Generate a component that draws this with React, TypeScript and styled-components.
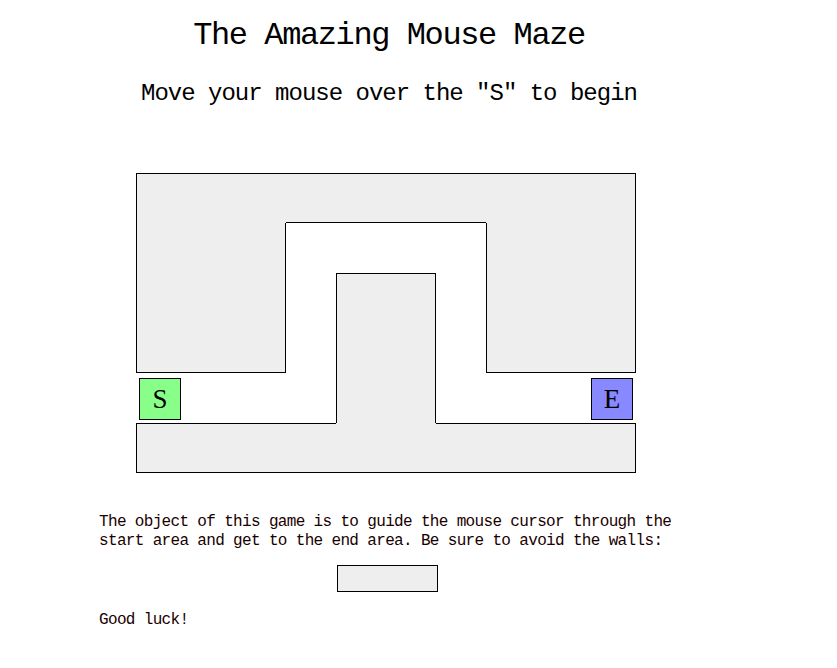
import React from "react";
import styled, { createGlobalStyle } from "styled-components";

const Global = createGlobalStyle`
  html, body { margin: 0; padding: 0; background: #fff; }
  body { font-family: "Liberation Mono", "DejaVu Sans Mono", monospace; color: #000; }
`;

const Page = styled.div`
  width: 837px;
  min-height: 668px;
  padding-top: 16px;
  box-sizing: border-box;
`;

const Content = styled.div`
  margin-left: 99px;
  width: 580px;
  display: flex;
  flex-direction: column;
`;

const Title = styled.h1`
  margin: 0;
  font-size: 32px;
  line-height: 40px;
  font-weight: normal;
  letter-spacing: -1.4px;
  text-align: center;
`;

const Subtitle = styled.h2`
  margin: 23px 0 0;
  font-size: 24px;
  line-height: 30px;
  font-weight: normal;
  letter-spacing: -1px;
  text-align: center;
`;

const Maze = styled.div`
  margin: 64px 0 0 37px;
  width: 500px;
  height: 300px;
  display: grid;
  grid-template-columns: 150px 50px 100px 50px 150px;
  grid-template-rows: 50px 50px 100px 50px 50px;
  background: #fff;
`;

type Sides = { $t?: boolean; $r?: boolean; $b?: boolean; $l?: boolean; $area: string };

const Wall = styled.div<Sides>`
  grid-area: ${(p) => p.$area};
  box-sizing: border-box;
  background: #eeeeee;
  border-style: solid;
  border-color: #000;
  border-width: ${(p) => `${p.$t ? 1 : 0}px ${p.$r ? 1 : 0}px ${p.$b ? 1 : 0}px ${p.$l ? 1 : 0}px`};
`;

const Marker = styled.div<{ $color: string; $area: string; $side: "start" | "end" }>`
  grid-area: ${(p) => p.$area};
  justify-self: ${(p) => p.$side};
  align-self: start;
  margin: 5px 3px 0;
  width: 42px;
  height: 42px;
  box-sizing: border-box;
  border: 1px solid #000;
  background: ${(p) => p.$color};
  display: flex;
  align-items: center;
  justify-content: center;
  font-family: "Liberation Serif", "DejaVu Serif", serif;
  font-size: 27px;
  line-height: 1;
  cursor: default;
`;

const Text = styled.p`
  margin: 40px 0 0;
  font-size: 16px;
  line-height: 19px;
  letter-spacing: -0.66px;
  color: #1a0000;
`;

const WallSample = styled.div`
  margin: 14px 0 0 238px;
  width: 101px;
  height: 27px;
  box-sizing: border-box;
  background: #eeeeee;
  border: 1px solid #000;
`;

const Luck = styled(Text)`
  margin-top: 19px;
`;

export default function App() {
  return (
    <Page>
      <Global />
      <Content>
        <Title>The Amazing Mouse Maze</Title>
        <Subtitle>Move your mouse over the "S" to begin</Subtitle>
        <Maze>
          <Wall $area="1 / 1 / 2 / 2" $t $l />
          <Wall $area="1 / 2 / 2 / 5" $t $b />
          <Wall $area="1 / 5 / 2 / 6" $t $r />
          <Wall $area="2 / 1 / 4 / 2" $l $r $b />
          <Wall $area="2 / 5 / 4 / 6" $l $r $b />
          <Wall $area="3 / 3 / 5 / 4" $t $l $r />
          <Wall $area="5 / 1 / 6 / 3" $t $l $b />
          <Wall $area="5 / 3 / 6 / 4" $b />
          <Wall $area="5 / 4 / 6 / 6" $t $r $b />
          <Marker $area="4 / 1 / 5 / 2" $side="start" $color="#88ff88">S</Marker>
          <Marker $area="4 / 5 / 5 / 6" $side="end" $color="#8888ff">E</Marker>
        </Maze>
        <Text>
          The object of this game is to guide the mouse cursor through the start area and get to the
          end area. Be sure to avoid the walls:
        </Text>
        <WallSample />
        <Luck>Good luck!</Luck>
      </Content>
    </Page>
  );
}
